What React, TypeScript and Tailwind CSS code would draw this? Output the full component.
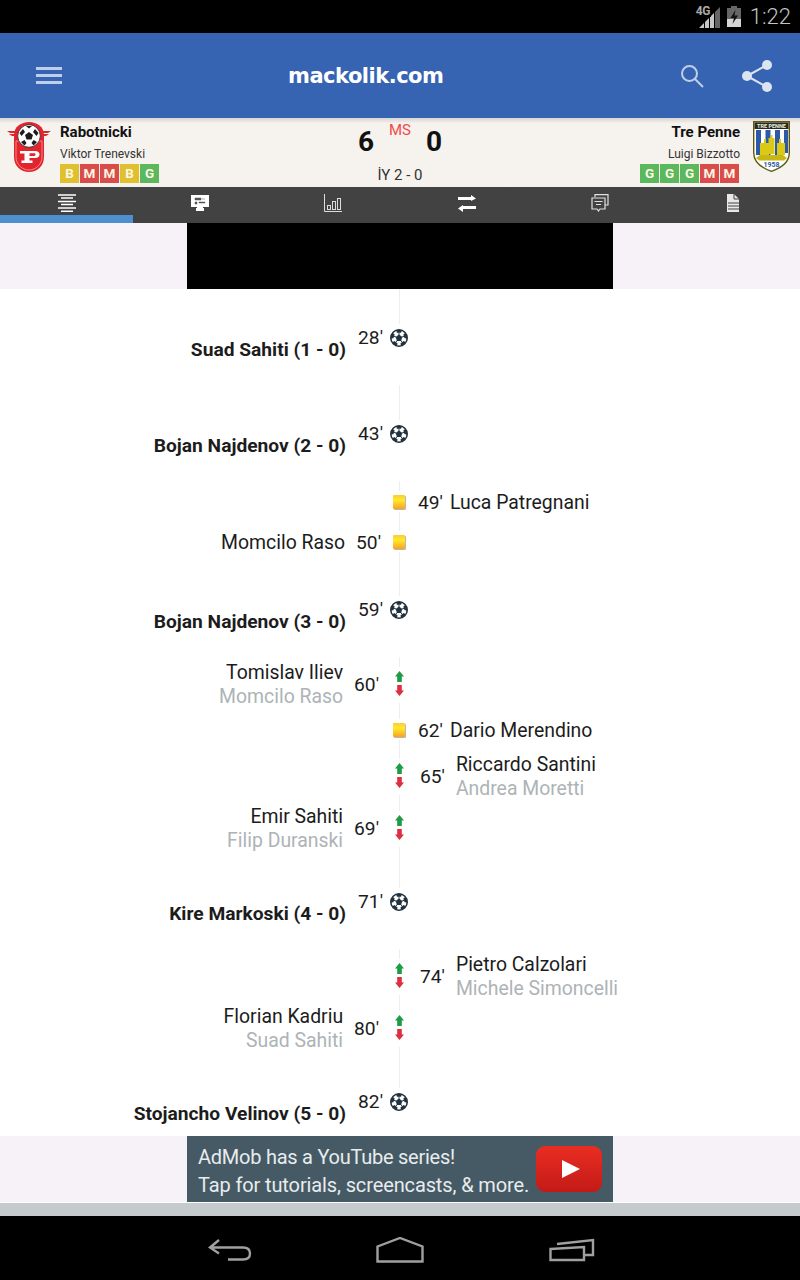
const sans = "font-['Roboto',sans-serif]";

type Ev =
  | { kind: "goal"; min: string; text: string }
  | { kind: "card"; side: "l" | "r"; min: string; text: string }
  | { kind: "sub"; side: "l" | "r"; min: string; top: string; bottom: string };

const events: Ev[] = [
  { kind: "goal", min: "28'", text: "Suad Sahiti (1 - 0)" },
  { kind: "goal", min: "43'", text: "Bojan Najdenov (2 - 0)" },
  { kind: "card", side: "r", min: "49'", text: "Luca Patregnani" },
  { kind: "card", side: "l", min: "50'", text: "Momcilo Raso" },
  { kind: "goal", min: "59'", text: "Bojan Najdenov (3 - 0)" },
  { kind: "sub", side: "l", min: "60'", top: "Tomislav Iliev", bottom: "Momcilo Raso" },
  { kind: "card", side: "r", min: "62'", text: "Dario Merendino" },
  { kind: "sub", side: "r", min: "65'", top: "Riccardo Santini", bottom: "Andrea Moretti" },
  { kind: "sub", side: "l", min: "69'", top: "Emir Sahiti", bottom: "Filip Duranski" },
  { kind: "goal", min: "71'", text: "Kire Markoski (4 - 0)" },
  { kind: "sub", side: "r", min: "74'", top: "Pietro Calzolari", bottom: "Michele Simoncelli" },
  { kind: "sub", side: "l", min: "80'", top: "Florian Kadriu", bottom: "Suad Sahiti" },
  { kind: "goal", min: "82'", text: "Stojancho Velinov (5 - 0)" },
];

function Ball() {
  return (
    <svg viewBox="0 0 18 18" className="h-[18px] w-[18px]">
      <circle cx="9" cy="9" r="8.2" fill="#fff" stroke="#21323f" strokeWidth="1.6" />
      {[0, 72, 144, 216, 288].map((a) => (
        <g key={a} transform={`rotate(${a} 9 9)`}>
          <path d="M6 1.200Q9 .3 12 1.200L11 3.800H7z" fill="#21323f" />
          <path d="M9 3.400V6" stroke="#21323f" strokeWidth=".9" />
        </g>
      ))}
      <path d="M9 5.600l3.300 2.400-1.250 3.900h-4.100L5.700 8z" fill="#21323f" />
    </svg>
  );
}

function Card() {
  return (
    <div className="h-[14px] w-[12px] rounded-[1px] bg-gradient-to-b from-[#ffc933] via-[#ffea2e] via-[35%] to-[#f9a01e] shadow-[1px_1px_0_#b8b8b8]" />
  );
}

function SubArrows() {
  return (
    <svg viewBox="0 0 9 25" className="h-[25px] w-[9px]">
      <path d="M4.500 0L9 5.500H6.800V11H2.200V5.500H0z" fill="#1f9a45" />
      <path d="M4.500 25L0 19.500h2.200V14h4.600v5.500H9z" fill="#dc2f3f" />
    </svg>
  );
}

// faint centre line, broken around the icon
function Seg({ h, bottom }: { h: number; bottom?: boolean }) {
  return (
    <div
      className={bottom ? "absolute bottom-0 left-[9px] w-px bg-[#eeeeee]" : "absolute top-0 left-[9px] w-px bg-[#eeeeee]"}
      style={{ height: h }}
    />
  );
}

function Row({ ev }: { ev: Ev }) {
  const txt = "text-[19.2px] leading-[28px] whitespace-nowrap text-[#1c1c1c]";
  const name = "text-[19.4px] leading-[28px] whitespace-nowrap text-[#1c1c1c]";

  if (ev.kind === "goal") {
    return (
      <div className="grid h-[96px] shrink-0 grid-cols-[390px_18px_1fr]">
        <div className="flex items-start justify-end gap-[12px] pr-[7px]">
          <span className={`mt-[47px] font-bold ${txt}`}>{ev.text}</span>
          <span className={`mt-[35px] ${txt}`}>{ev.min}</span>
        </div>
        <div className="relative pt-[40px]">
          <Seg h={35} />
          <Ball />
        </div>
      </div>
    );
  }

  if (ev.kind === "card") {
    return (
      <div className="grid h-[40px] shrink-0 grid-cols-[390px_18px_1fr]">
        <div className="flex items-start justify-end gap-[11px] pt-[8px] pr-[9px]">
          {ev.side === "l" && (
            <>
              <span className={name}>{ev.text}</span>
              <span className={txt}>{ev.min}</span>
            </>
          )}
        </div>
        <div className="relative pt-[14px] pl-[3px]">
          <Seg h={10} />
          <Seg h={9} bottom />
          <Card />
        </div>
        <div className="flex items-start gap-[7px] pt-[8px] pl-[10px]">
          {ev.side === "r" && (
            <>
              <span className={txt}>{ev.min}</span>
              <span className={name}>{ev.text}</span>
            </>
          )}
        </div>
      </div>
    );
  }

  const names = (
    <div className="pt-[4px] text-[19.4px] leading-[24px] whitespace-nowrap">
      <div className="text-[#1c1c1c]">{ev.top}</div>
      <div className="text-[#adb3b6]">{ev.bottom}</div>
    </div>
  );
  const minute = <span className={`mt-[14px] ${txt}`}>{ev.min}</span>;

  return (
    <div className="grid h-[52px] shrink-0 grid-cols-[390px_18px_1fr]">
      <div className="flex items-start justify-end gap-[11px] pr-[11px] text-right">
        {ev.side === "l" && (
          <>
            {names}
            {minute}
          </>
        )}
      </div>
      <div className="relative pt-[14px] pl-[5px]">
        <Seg h={10} />
        <Seg h={6} bottom />
        <SubArrows />
      </div>
      <div className="flex items-start gap-[11px] pl-[12px]">
        {ev.side === "r" && (
          <>
            {minute}
            {names}
          </>
        )}
      </div>
    </div>
  );
}

function Form({ items }: { items: string }) {
  const bg: Record<string, string> = { B: "bg-[#e0c02e]", M: "bg-[#d94c4a]", G: "bg-[#5cb85c]" };
  return (
    <div className="flex gap-px">
      {items.split("").map((c, i) => (
        <div key={i} className={`flex h-[19px] w-[19px] items-center justify-center text-[13.5px] font-bold text-[#fbf7e4] ${bg[c]}`}>{c}</div>
      ))}
    </div>
  );
}

function RedCrest() {
  return (
    <svg viewBox="0 0 44 52" className="h-[52px] w-[44px]">
      <path d="M0 10h10l1 2H3zM2 13h9l1 2H5zM44 10H34l-1 2h8zM42 13h-9l-1 2h7z" fill="#e2242c" />
      <path d="M7 14C7 6 14 1 22 1s15 5 15 13v22c0 9-7 15-15 15S7 45 7 36z" fill="#e2242c" />
      <path d="M9 20h26v16c0 7-6 13-13 13S9 43 9 36z" fill="none" stroke="#f7b3b3" strokeWidth=".7" />
      <circle cx="22" cy="15" r="11.300" fill="#fff" stroke="#222" strokeWidth=".8" />
      <path d="M22 11l4 3-1.500 4.500h-5L18 14zM12.500 12l3.500-4 2 3-3.500 4zM31.500 12L28 8l-2 3 3.500 4zM19 5h6l-3 2.500zM14 21l3.500-2 2 3-2 2.500zM30 21l-3.500-2-2 3 2 2.500z" fill="#1c1c1c" />
      <path d="M13 30h15c3 0 4.500 1.500 4.500 3.500S31 37 28 37h-5.500v2.500h3V42h-11v-2.500h3V32.500H13z" fill="#fff" />
      <path d="M22.500 32.200v2.800h4.500c1 0 1.500-.4 1.500-1.400s-.5-1.400-1.500-1.400z" fill="#e2242c" />
    </svg>
  );
}

function BlueCrest() {
  return (
    <svg viewBox="0 0 37 51" className="h-[51px] w-[37px]">
      <path d="M.7.7h35.600v31C36.300 42 28 47 18.500 50.300 9 47 .7 42 .7 31.700z" fill="#fff" stroke="#5d5a10" strokeWidth="1.400" />
      <rect x="1.500" y="1.500" width="34" height="6.500" fill="#2a2a1e" />
      <text x="18.500" y="6.700" textAnchor="middle" fontSize="5.500" fontWeight="700" fill="#f0f0e0" fontFamily="Roboto, sans-serif">TRE PENNE</text>
      <path d="M3 9h5v25H3zM12.500 9h5v25h-5zM22 9h5v25h-5zM31 9h4v23h-4z" fill="#2d5aa8" />
      <path d="M7 34V22h4v-4h2v4h3v12zM15.500 33V17h2v-3h2v3h2v16zM24 34V22h2v-4h2v4h4v12z" fill="#dcc816" />
      <path d="M3 37l4-3h23l4 3-3 2.500H6z" fill="#c9b814" />
      <text x="18.500" y="45.500" textAnchor="middle" fontSize="7" fontWeight="700" fill="#2d5aa8" fontFamily="Roboto, sans-serif">1958</text>
    </svg>
  );
}

function TabIcon({ i }: { i: number }) {
  const s = "h-[18px] w-[18px]";
  if (i === 0)
    return (
      <svg viewBox="0 0 18 18" className={s}>
        <path d="M0 1h18M3 4h12M0 7.500h18M3 10.500h12M0 14h18M3 17.200h12" stroke="#fff" strokeWidth="1.500" />
      </svg>
    );
  if (i === 1)
    return (
      <svg viewBox="0 0 18 18" className={s}>
        <path d="M0 1h18v12H12v1h1v3H5v-3h1v-1H0z" fill="#fff" />
        <path d="M4 4h6v2H4zM11 5h3M4 8h2v2H4zM8 8h6v1H8z" fill="#555" stroke="#555" strokeWidth=".5" />
      </svg>
    );
  if (i === 2)
    return (
      <svg viewBox="0 0 18 18" className={s} fill="none" stroke="#ddd">
        <path d="M.5 0v17.500H18" />
        <rect x="3.500" y="11.500" width="3" height="4" />
        <rect x="8.500" y="7.500" width="3" height="8" />
        <rect x="13.500" y="4.500" width="3" height="11" />
      </svg>
    );
  if (i === 3)
    return (
      <svg viewBox="0 0 18 18" className={s} fill="#fff">
        <path d="M0 3h13V1l5 3.500L13 7V6H0zM18 12H5v-1l-5 3.500L5 18v-3h13z" />
      </svg>
    );
  if (i === 4)
    return (
      <svg viewBox="0 0 18 18" className={s} fill="none" stroke="#e2e2e2" strokeWidth="1.200">
        <path d="M4 3V.7h13V11h-3" />
        <path d="M1 4h13v11H9l-1.500 2L6 15H1z" fill="#424242" />
        <path d="M3.500 7.500h8M5 10.500h5" />
      </svg>
    );
  return (
    <svg viewBox="0 0 18 18" className={s}>
      <path d="M3 0h7l5 5v13H3z" fill="#e8e8e8" />
      <path d="M10 0v5h5M4 9h11M4 12h11M4 15h11" stroke="#424242" fill="none" />
    </svg>
  );
}

export default function App() {
  return (
    <div className={`relative flex h-[1280px] w-[800px] flex-col overflow-hidden bg-white ${sans}`}>
      {/* status bar */}
      <div className="flex h-[33px] shrink-0 items-center justify-end bg-black pr-[9px]">
        <div className="relative mr-[7px] h-[22px] w-[24px]">
          <svg viewBox="0 0 21 21" className="absolute right-0 bottom-0 h-[21px] w-[21px]">
            <path d="M0 21l5-5v5zM6 21v-6l4-4v10zM11 21V10l4-4v15z" fill="#c8c8c8" />
            <path d="M16 21V5l5-5v21z" fill="#666" />
          </svg>
          <span className="absolute top-0 left-0 bg-black pr-px text-[12px] leading-[11px] font-bold tracking-[-0.5px] text-[#aaa]">4G</span>
        </div>
        <svg viewBox="0 0 14 21" className="mr-[9px] h-[21px] w-[14px]">
          <path d="M4 0h6v2h4v19H0V2h4z" fill="#666" />
          <path d="M0 13h14v8H0z" fill="#d5d5d5" />
          <path d="M8.500 4L3.500 12H7l-1.500 6L11 9.500H7.500z" fill="#111" />
        </svg>
        <span className="text-[22px] leading-[33px] font-light text-[#c4c4c4]">1:22</span>
      </div>

      {/* app bar */}
      <div className="relative flex h-[85px] shrink-0 items-center justify-between bg-[#3764b2] pr-[28px] pl-[36px]">
        <div className="flex w-[26px] flex-col gap-[4px]">
          <div className="h-[3px] bg-[#c0cfe8]" />
          <div className="h-[3px] bg-[#c0cfe8]" />
          <div className="h-[3px] bg-[#c0cfe8]" />
        </div>
        <div className="absolute top-[30px] left-[288px] font-['DejaVu_Sans',sans-serif] text-[21px] leading-[26px] font-bold tracking-[-0.5px] text-white">mackolik.com</div>
        <div className="flex items-center gap-[38px]">
          <svg viewBox="0 0 24 24" className="h-[24px] w-[24px]" fill="none" stroke="#c0cfe8" strokeWidth="2">
            <circle cx="9.500" cy="9.500" r="7.500" />
            <path d="M15 15l8 8" />
          </svg>
          <svg viewBox="0 0 30 32" className="h-[32px] w-[30px]">
            <path d="M5 16L25 5M5 16l20 11" stroke="#dbe5f2" strokeWidth="2" />
            <circle cx="5" cy="16" r="5" fill="#dbe5f2" />
            <circle cx="25" cy="5" r="5" fill="#dbe5f2" />
            <circle cx="25" cy="27" r="5" fill="#dbe5f2" />
          </svg>
        </div>
      </div>

      {/* match header */}
      <div className="flex h-[69px] shrink-0 bg-gradient-to-b from-[#d8d5d2] from-0% via-[#f6f2ee] via-[8%] to-[#f6f2ee] pt-[3px]">
        <div className="flex flex-1">
          <div className="ml-[7px]"><RedCrest /></div>
          <div className="ml-[9px] flex flex-col">
            <div className="mt-[1px] text-[15px] leading-[20px] font-bold text-[#111]">Rabotnicki</div>
            <div className="mt-[2px] text-[12px] leading-[20px] text-[#333]">Viktor Trenevski</div>
            <div><Form items="BMMBG" /></div>
          </div>
        </div>
        <div className="w-[84px]">
          <div className="flex h-[45px] items-start justify-between">
            <span className="mt-[3px] text-[28px] leading-[36px] font-bold text-[#111]">6</span>
            <span className="text-[15px] leading-[18px] text-[#f04a4a]">MS</span>
            <span className="mt-[3px] text-[28px] leading-[36px] font-bold text-[#111]">0</span>
          </div>
          <div className="text-center text-[15px] leading-[18px] whitespace-nowrap text-[#333]">İY 2 - 0</div>
        </div>
        <div className="flex flex-1 justify-end">
          <div className="mr-[13px] flex flex-col items-end">
            <div className="mt-[1px] text-[15px] leading-[20px] font-bold text-[#111]">Tre Penne</div>
            <div className="mt-[2px] text-[12px] leading-[20px] text-[#333]">Luigi Bizzotto</div>
            <div className="mr-[1px]"><Form items="GGGMM" /></div>
          </div>
          <div className="mr-[10px]"><BlueCrest /></div>
        </div>
      </div>

      {/* tabs */}
      <div className="relative grid h-[36px] shrink-0 grid-cols-6 bg-[#424242]">
        {[0, 1, 2, 3, 4, 5].map((i) => (
          <div key={i} className="flex justify-center pt-[7px]"><TabIcon i={i} /></div>
        ))}
        <div className="absolute bottom-0 left-0 h-[8px] w-[133px] bg-[#4f8fcf]" />
      </div>

      {/* top banner */}
      <div className="flex h-[66px] shrink-0 justify-center bg-[#f6f2f7]">
        <div className="w-[426px] bg-black" />
      </div>

      {/* timeline */}
      <div className="flex min-h-0 flex-1 flex-col overflow-hidden">
        {events.map((ev, i) => (
          <Row key={i} ev={ev} />
        ))}
      </div>

      {/* bottom banner */}
      <div className="flex h-[66px] shrink-0 justify-center bg-[#f6f2f7]">
        <div className="flex w-[426px] items-center justify-between bg-[#455a64] px-[11px]">
          <div className="pt-[4px] text-[20px] leading-[28px] whitespace-nowrap text-[#e8ecee]">
            <div className="tracking-[-0.25px]">AdMob has a YouTube series!</div>
            <div className="tracking-[-0.12px]">Tap for tutorials, screencasts, &amp; more.</div>
          </div>
          <div className="flex h-[46px] w-[66px] items-center justify-center rounded-[9px] bg-gradient-to-b from-[#ea2d23] to-[#c31a17] pl-[4px]">
            <svg viewBox="0 0 18 18" className="h-[18px] w-[18px]"><path d="M0 0l18 9L0 18z" fill="#fff" /></svg>
          </div>
        </div>
      </div>
      <div className="h-[14px] shrink-0 border-t border-white bg-[#c5cacc]" />

      {/* system nav */}
      <div className="relative flex h-[64px] shrink-0 items-center bg-black">
        <svg viewBox="0 0 44 24" className="absolute top-[22px] left-[208px] h-[24px] w-[44px]" fill="none" stroke="#a0a0a0" strokeWidth="2.400">
          <path d="M11 2L2 9.500l9 6M2 9.500h33c5 0 7 2.500 7 6s-2 6-7 6H20" />
        </svg>
        <svg viewBox="0 0 48 26" className="absolute top-[21px] left-[376px] h-[26px] w-[48px]" fill="none" stroke="#a0a0a0" strokeWidth="2.400">
          <path d="M1.500 9.500L24 1l22.500 8.500V24.500h-45z" />
        </svg>
        <svg viewBox="0 0 46 24" className="absolute top-[22px] left-[549px] h-[24px] w-[46px]" fill="none" stroke="#a0a0a0" strokeWidth="2.400">
          <path d="M1.500 11L35 9v13H1.500z" />
          <path d="M8 6l36-4v15h-8" />
        </svg>
      </div>
    </div>
  );
}
